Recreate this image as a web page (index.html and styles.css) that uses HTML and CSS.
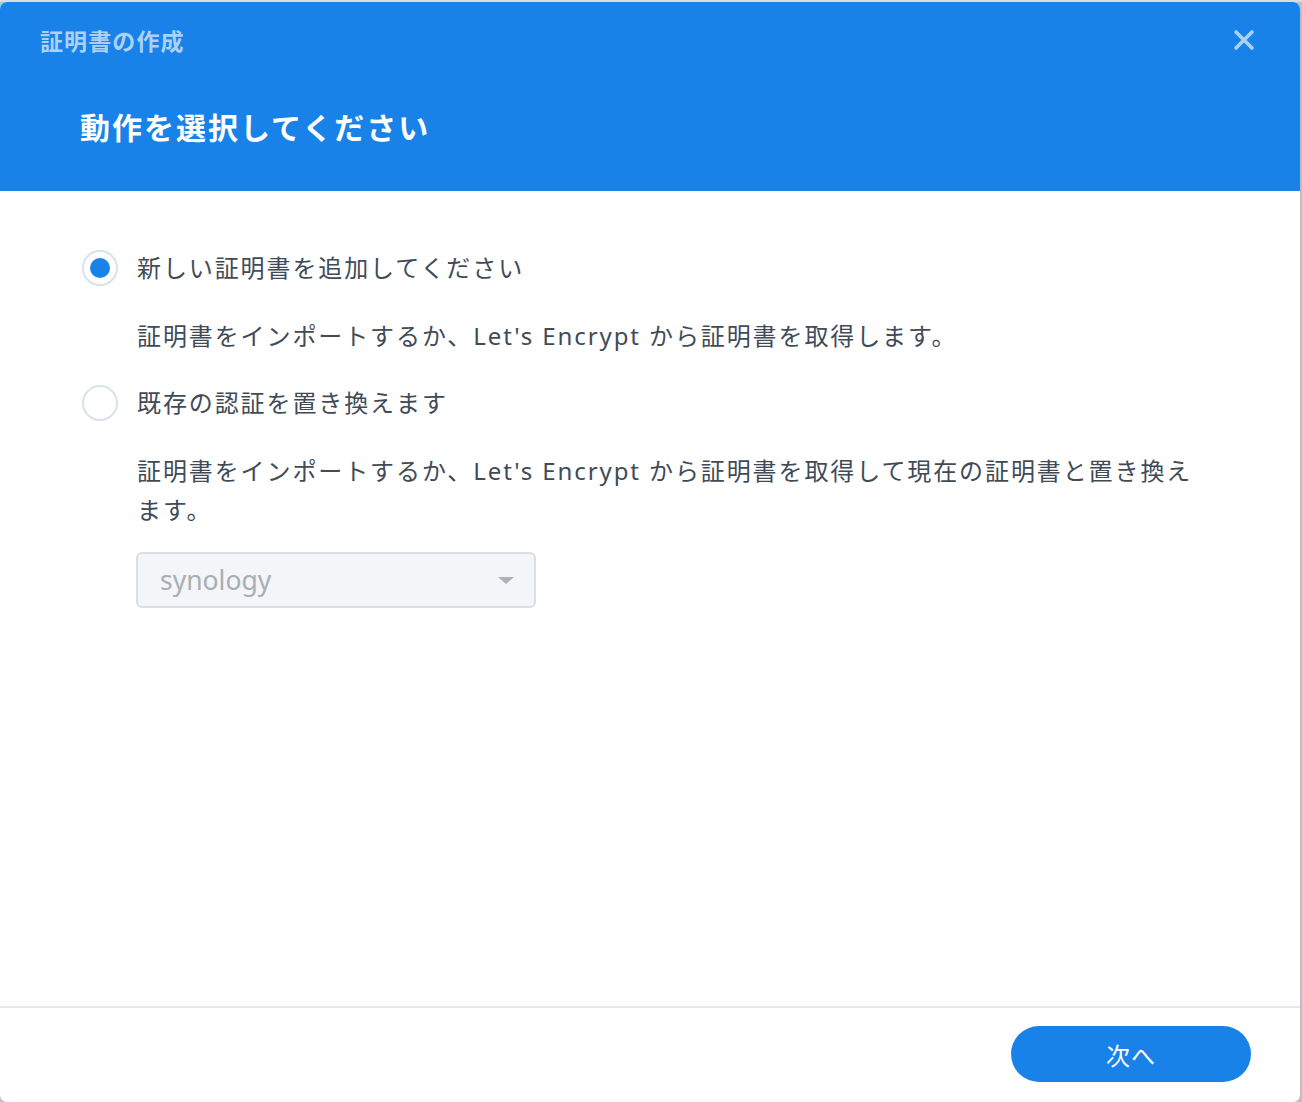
FILE: index.html
```html
<!DOCTYPE html>
<html lang="ja">
<head>
<meta charset="utf-8">
<title>証明書の作成</title>
<link rel="stylesheet" href="styles.css">
</head>
<body>
<div class="backdrop">
  <div class="dialog">
    <header class="dlg-header">
      <div class="title-row">
        <span class="dlg-title">証明書の作成</span>
        <button class="close-btn" aria-label="閉じる">
          <svg width="22" height="22" viewBox="0 0 22 22"><path d="M3 3 L19 19 M19 3 L3 19" stroke="currentColor" stroke-width="3.6" stroke-linecap="round"/></svg>
        </button>
      </div>
      <h1 class="step-title">動作を選択してください</h1>
    </header>
    <main class="dlg-body">
      <label class="radio-row">
        <span class="radio checked"><span class="dot"></span></span>
        <span class="radio-label">新しい証明書を追加してください</span>
      </label>
      <p class="desc">証明書をインポートするか、Let's Encrypt から証明書を取得します。</p>
      <label class="radio-row">
        <span class="radio"></span>
        <span class="radio-label">既存の認証を置き換えます</span>
      </label>
      <p class="desc">証明書をインポートするか、Let's Encrypt から証明書を取得して現在の証明書と置き換えます。</p>
      <div class="select">
        <span class="select-value">synology</span>
        <span class="caret"></span>
      </div>
    </main>
    <footer class="dlg-footer">
      <button class="primary-btn">次へ</button>
    </footer>
  </div>
</div>
</body>
</html>
```
FILE: styles.css
```css
* { box-sizing: border-box; }
html, body { margin: 0; padding: 0; }
body {
  background: #c4c9cf;
  font-family: "Noto Sans", "Noto Sans CJK JP", sans-serif;
  color: #414b57;
  overflow: hidden;
}
.backdrop {
  width: 1302px;
  height: 1102px;
  padding-top: 2px;
  background: linear-gradient(#dcdcdc 0 2px, #b9bfc6 2px);
}
.dialog {
  width: 1300px;
  height: 1100px;
  background: #ffffff;
  border-radius: 7px;
  overflow: hidden;
  display: flex;
  flex-direction: column;
}
.dlg-header {
  background: #1982e8;
  height: 189px;
  padding: 22px 45px 0 40px;
  flex-shrink: 0;
}
.title-row {
  display: flex;
  align-items: center;
  justify-content: space-between;
  height: 32px;
}
.dlg-title {
  font-size: 23px;
  font-weight: 700;
  letter-spacing: 1.1px;
  color: #acd1f7;
}
.close-btn {
  border: 0;
  background: none;
  padding: 0;
  color: #acd1f7;
  display: flex;
  width: 22px;
  height: 22px;
}
.step-title {
  margin: 52px 0 0 40px;
  font-size: 30px;
  line-height: 40px;
  font-weight: 700;
  letter-spacing: 2px;
  color: #ffffff;
}
.dlg-body {
  flex: 1;
  padding: 57px 96px 0 82px;
  display: flex;
  flex-direction: column;
  align-items: flex-start;
}
.radio-row {
  display: flex;
  align-items: center;
  height: 40px;
  gap: 19px;
}
.radio {
  width: 36px;
  height: 36px;
  border-radius: 50%;
  border: 2px solid #d9e1ea;
  display: flex;
  align-items: center;
  justify-content: center;
  flex-shrink: 0;
}
.radio .dot {
  width: 20px;
  height: 20px;
  border-radius: 50%;
  background: #1982e8;
}
.radio-label, .desc {
  font-size: 24px;
  letter-spacing: 1.9px;
}
.radio-label { line-height: 40px; }
.desc {
  margin: 28px 0 28px 55px;
  line-height: 39px;
}
.desc:last-of-type { margin-bottom: 23px; }
.select {
  margin-left: 54px;
  width: 400px;
  height: 56px;
  background: #f3f5f8;
  border: 2px solid #d8dfe7;
  border-radius: 6px;
  display: flex;
  align-items: center;
  justify-content: space-between;
  padding: 0 20px 0 22px;
}
.select-value {
  font-size: 26.5px;
  color: #a9aeb4;
}
.caret {
  width: 0;
  height: 0;
  border-left: 8px solid transparent;
  border-right: 8px solid transparent;
  border-top: 7px solid #aeb3b9;
}
.dlg-footer {
  border-top: 2px solid #e4e8ec;
  height: 96px;
  display: flex;
  align-items: center;
  justify-content: flex-end;
  padding: 0 49px 2px 0;
  flex-shrink: 0;
}
.primary-btn {
  width: 240px;
  height: 56px;
  border: 0;
  border-radius: 28px;
  background: #1982e8;
  color: #ffffff;
  font-family: "Noto Sans", "Noto Sans CJK JP", sans-serif;
  font-size: 24px;
  letter-spacing: 1px;
}
```
